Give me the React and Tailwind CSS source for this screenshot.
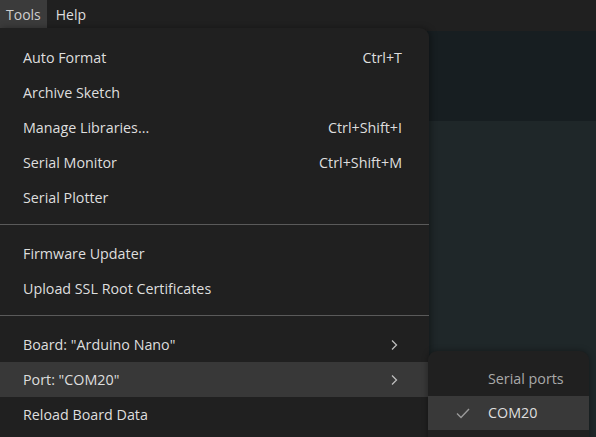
import React from "react";

const Chevron = () => (
  <svg width="8" height="12" viewBox="0 0 8 12" fill="none" className="text-[#bdbdbd]">
    <path d="M2 1.5 L6.5 6 L2 10.5" stroke="currentColor" strokeWidth="1.3" />
  </svg>
);

function Item({ label, shortcut, arrow, active }) {
  return (
    <div className={`flex items-center h-[35px] pl-[23px] pr-[27px] ${active ? "bg-[#383838]" : ""}`}>
      <span>{label}</span>
      {shortcut && <span className="ml-auto">{shortcut}</span>}
      {arrow && (
        <span className="ml-auto pr-[4px] flex items-center">
          <Chevron />
        </span>
      )}
    </div>
  );
}

export default function App() {
  return (
    <div
      className="relative w-[596px] h-[437px] overflow-hidden bg-[#1f2729] text-[14px] text-[#dedede]"
      style={{ fontFamily: '"Open Sans", "Noto Sans", sans-serif' }}
    >
      {/* menubar */}
      <div className="h-[31px] bg-[#202020] flex items-start">
        <div className="h-[28px] px-[6px] flex items-center bg-[#3b3b3b] text-[#cfcfcf]">Tools</div>
        <div className="h-[28px] px-[9px] flex items-center">Help</div>
      </div>
      <div className="h-[90px] bg-[#171e21]" />

      {/* tools menu */}
      <div className="absolute left-0 top-[28px] w-[429px] h-[420px] bg-[#202020] rounded-tr-[9px] shadow-[2px_0_6px_rgba(0,0,0,0.35)] pt-[12px] text-[14.3px]">
        <Item label="Auto Format" shortcut="Ctrl+T" />
        <Item label="Archive Sketch" />
        <Item label="Manage Libraries..." shortcut="Ctrl+Shift+I" />
        <Item label="Serial Monitor" shortcut="Ctrl+Shift+M" />
        <Item label="Serial Plotter" />
        <div className="h-[1px] bg-[#5a5a5a] mt-[9px] mb-[11px]" />
        <Item label="Firmware Updater" />
        <Item label="Upload SSL Root Certificates" />
        <div className="h-[1px] bg-[#5a5a5a] mt-[9px] mb-[11px]" />
        <Item label='Board: "Arduino Nano"' arrow />
        <Item label='Port: "COM20"' arrow active />
        <Item label="Reload Board Data" />
      </div>

      {/* port submenu */}
      <div className="absolute left-[428px] top-[351px] w-[161px] h-[100px] bg-[#202020] rounded-[9px] shadow-[0_0_6px_rgba(0,0,0,0.4)] pt-[11px] text-[14.3px]">
        <div className="h-[34px] flex items-center pl-[60px] text-[#a9a9a9]">Serial ports</div>
        <div className="h-[34px] flex items-center bg-[#393939]">
          <span className="w-[60px] flex justify-center pl-[10px]">
            <svg width="14" height="11" viewBox="0 0 14 11" fill="none">
              <path d="M1 5.5 L5 9.5 L13 1" stroke="#9a9a9a" strokeWidth="1.4" />
            </svg>
          </span>
          <span>COM20</span>
        </div>
      </div>
    </div>
  );
}
